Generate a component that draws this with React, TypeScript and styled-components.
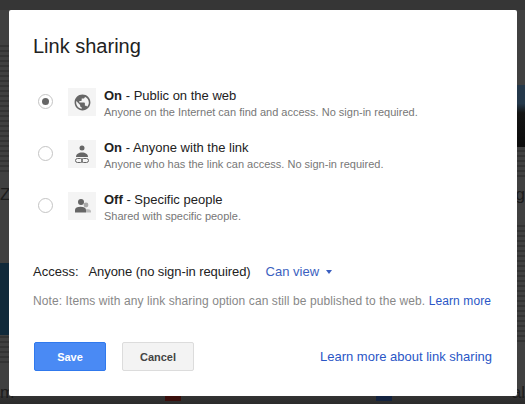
import React from 'react';
import styled, { createGlobalStyle } from 'styled-components';

const GlobalStyle = createGlobalStyle`
  html, body {
    margin: 0;
    padding: 0;
    background: #404040;
  }
  * {
    box-sizing: border-box;
  }
`;

const Page = styled.div`
  width: 525px;
  height: 404px;
  position: relative;
  overflow: hidden;
  display: flex;
  padding: 10px 8px 8px 9px;
  font-family: 'Liberation Sans', Arial, sans-serif;
  background: #404040;
`;

// dimmed page behind the modal, only the edges of it show
const TopBand = styled.div`
  position: absolute;
  left: 0;
  top: 0;
  width: 100%;
  height: 10px;
  background: #363636;
`;

const BottomBand = styled.div`
  position: absolute;
  left: 0;
  bottom: 0;
  width: 100%;
  height: 8px;
  background: linear-gradient(#333 0, #2b2b2b 100%);
`;

const BottomMark = styled.div<{ $left: number; $color: string }>`
  position: absolute;
  left: ${(props) => props.$left}px;
  bottom: 3px;
  width: 16px;
  height: 5px;
  background: ${(props) => props.$color};
`;

const TextLines = styled.div<{ $top: number; $height: number; $side: 'left' | 'right' }>`
  position: absolute;
  ${(props) => props.$side}: 0;
  top: ${(props) => props.$top}px;
  width: ${(props) => (props.$side === 'left' ? 9 : 8)}px;
  height: ${(props) => props.$height}px;
  background: repeating-linear-gradient(#333 0, #333 2px, #404040 2px, #404040 5px);
`;

const LeftBanner = styled.div`
  position: absolute;
  left: 0;
  top: 263px;
  width: 9px;
  height: 72px;
  background: #10293a;
`;

const RightImage = styled.div`
  position: absolute;
  right: 0;
  top: 85px;
  width: 8px;
  height: 62px;
  background: linear-gradient(#24384a 0, #24384a 30%, #141414 45%, #0c0c0c 100%);
`;

const BackText = styled.span<{ $side: 'left' | 'right'; $top: number }>`
  position: absolute;
  ${(props) => props.$side}: 0;
  top: ${(props) => props.$top}px;
  font-size: 17px;
  line-height: 18px;
  color: #1c1c1c;
`;

const Dialog = styled.div`
  position: relative;
  width: 508px;
  height: 386px;
  background: #fff;
  border-radius: 2px;
  display: flex;
  flex-direction: column;
  padding: 24px 25px 0 24px;
`;

const Title = styled.h1`
  margin: 0;
  font-size: 20px;
  line-height: 24px;
  font-weight: 400;
  color: #222;
`;

const Options = styled.div`
  display: flex;
  flex-direction: column;
  gap: 24px;
  margin-top: 30px;
  margin-left: 5px;
`;

const Option = styled.div`
  display: flex;
  align-items: flex-start;
  height: 28px;
`;

const Radio = styled.span<{ $checked?: boolean }>`
  width: 15px;
  height: 15px;
  margin: 6px 15px 0 0;
  border-radius: 50%;
  border: 1px solid #c4c4c4;
  display: flex;
  align-items: center;
  justify-content: center;
  flex: none;
  &::after {
    content: '';
    width: 7px;
    height: 7px;
    border-radius: 50%;
    background: ${(props) => (props.$checked ? '#666' : 'transparent')};
  }
`;

const IconBox = styled.div`
  width: 28px;
  height: 28px;
  background: #f4f4f4;
  display: flex;
  align-items: center;
  justify-content: center;
  flex: none;
  margin-right: 8px;
`;

const OptionText = styled.div`
  display: flex;
  flex-direction: column;
`;

const OptionTitle = styled.div`
  font-size: 13px;
  line-height: 16px;
  color: #222;
  b {
    font-weight: 700;
  }
`;

const OptionHint = styled.div`
  font-size: 11px;
  line-height: 14px;
  margin-top: 1px;
  color: #777;
`;

const AccessRow = styled.div`
  display: flex;
  align-items: center;
  font-size: 13px;
  line-height: 16px;
  color: #222;
  margin-top: 44px;
`;

const AccessLabel = styled.span`
  margin-right: 10px;
`;

const AccessValue = styled.span`
  letter-spacing: -0.07px;
`;

const AccessMenu = styled.span`
  display: flex;
  align-items: center;
  color: #3b5fc0;
  margin-left: 15px;
  margin-top: -1px;
  &::after {
    content: '';
    margin-left: 7px;
    margin-top: 1px;
    border: 3.5px solid transparent;
    border-top: 4px solid #3b5fc0;
    border-bottom: 0;
  }
`;

const Note = styled.div`
  font-size: 12px;
  line-height: 16px;
  margin-top: 13px;
  color: #888;
  white-space: nowrap;
  letter-spacing: 0.09px;
`;

const Link = styled.a`
  color: #2a56c6;
`;

const Footer = styled.div`
  display: flex;
  align-items: center;
  margin-top: 33px;
  margin-left: 1px;
`;

const Button = styled.div<{ $primary?: boolean }>`
  width: 72px;
  height: 29px;
  margin-right: 16px;
  border-radius: 2px;
  font-size: 11px;
  font-weight: 700;
  display: flex;
  align-items: center;
  justify-content: center;
  border: 1px solid ${(props) => (props.$primary ? '#3079ed' : '#dcdcdc')};
  background: ${(props) => (props.$primary ? '#4a8af4' : '#f3f3f3')};
  color: ${(props) => (props.$primary ? '#fff' : '#444')};
`;

const FooterLink = styled(Link)`
  margin-left: auto;
  font-size: 13px;
`;

const GlobeIcon = () => (
  <svg width="19" height="19" viewBox="0 0 24 24">
    <path
      fill="#666"
      d="M12 2C6.48 2 2 6.48 2 12s4.48 10 10 10 10-4.48 10-10S17.52 2 12 2zm-1 17.93C7.05 19.44 4 16.08 4 12c0-.62.08-1.21.21-1.79L9 15v1c0 1.1.9 2 2 2v1.93zm6.9-2.54c-.26-.81-1-1.39-1.9-1.39h-1v-3c0-.55-.45-1-1-1H8v-2h2c.55 0 1-.45 1-1V7h2c1.1 0 2-.9 2-2v-.41c2.93 1.19 5 4.06 5 7.41 0 2.08-.8 3.97-2.1 5.39z"
    />
  </svg>
);

const LinkPersonIcon = () => (
  <svg width="16" height="20" viewBox="0 0 16 20">
    <circle cx="8" cy="4" r="2.5" fill="#666" />
    <path fill="#666" d="M2 13c0-3 2.6-4.6 6-4.6s6 1.6 6 4.6z" />
    <rect x="1.5" y="14.5" width="7" height="4" rx="2" fill="none" stroke="#666" strokeWidth="1" />
    <rect x="7.5" y="14.5" width="7" height="4" rx="2" fill="none" stroke="#666" strokeWidth="1" />
  </svg>
);

const PeopleIcon = () => (
  <svg width="18" height="16" viewBox="0 0 18 16">
    <circle cx="13" cy="7" r="2.4" fill="#aaa" />
    <path fill="#bbb" d="M13 14.6v-3.4h2c1.5 0 3 .8 3 2v1.4z" />
    <circle cx="8" cy="4" r="3" fill="#666" />
    <path fill="#666" d="M2 14.6v-2.8c0-2 2.4-3 5.5-3s5.5 1 5.5 3v2.8z" />
  </svg>
);

const options = [
  {
    state: 'On',
    label: 'Public on the web',
    hint: 'Anyone on the Internet can find and access. No sign-in required.',
    icon: <GlobeIcon />,
    checked: true,
  },
  {
    state: 'On',
    label: 'Anyone with the link',
    hint: 'Anyone who has the link can access. No sign-in required.',
    icon: <LinkPersonIcon />,
    checked: false,
  },
  {
    state: 'Off',
    label: 'Specific people',
    hint: 'Shared with specific people.',
    icon: <PeopleIcon />,
    checked: false,
  },
];

const App = () => {
  return (
    <Page>
      <GlobalStyle />
      <TopBand />
      <BottomBand />
      <BottomMark $left={165} $color="#3a0f0c" />
      <BottomMark $left={376} $color="#14233f" />
      <TextLines $side="left" $top={45} $height={130} />
      <TextLines $side="left" $top={336} $height={30} />
      <LeftBanner />
      <RightImage />
      <TextLines $side="right" $top={150} $height={28} />
      <TextLines $side="right" $top={225} $height={120} />
      <BackText $side="left" $top={186}>Z</BackText>
      <BackText $side="right" $top={186}>ng</BackText>
      <BackText $side="left" $top={384}>m</BackText>
      <BackText $side="right" $top={384}>al</BackText>
      <Dialog>
        <Title>Link sharing</Title>
        <Options>
          {options.map((option) => (
            <Option key={option.label}>
              <Radio $checked={option.checked} />
              <IconBox>{option.icon}</IconBox>
              <OptionText>
                <OptionTitle>
                  <b>{option.state}</b> - {option.label}
                </OptionTitle>
                <OptionHint>{option.hint}</OptionHint>
              </OptionText>
            </Option>
          ))}
        </Options>
        <AccessRow>
          <AccessLabel>Access:</AccessLabel>
          <AccessValue>Anyone (no sign-in required)</AccessValue>
          <AccessMenu>Can view</AccessMenu>
        </AccessRow>
        <Note>
          Note: Items with any link sharing option can still be published to the web.{' '}
          <Link>Learn more</Link>
        </Note>
        <Footer>
          <Button $primary>Save</Button>
          <Button>Cancel</Button>
          <FooterLink>Learn more about link sharing</FooterLink>
        </Footer>
      </Dialog>
    </Page>
  );
};

export default App;
